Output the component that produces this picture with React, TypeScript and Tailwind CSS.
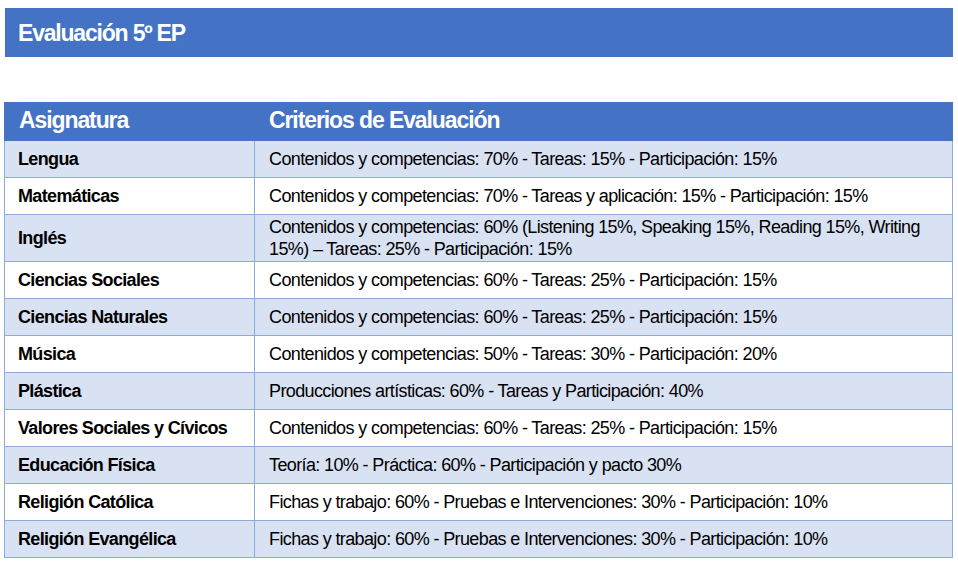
const rows: [string, string][] = [
  ["Lengua", "Contenidos y competencias: 70% - Tareas: 15% - Participación: 15%"],
  ["Matemáticas", "Contenidos y competencias: 70% - Tareas y aplicación: 15% - Participación: 15%"],
  [
    "Inglés",
    "Contenidos y competencias: 60% (Listening 15%, Speaking 15%, Reading 15%, Writing 15%) – Tareas: 25% - Participación: 15%",
  ],
  ["Ciencias Sociales", "Contenidos y competencias: 60% - Tareas: 25% - Participación: 15%"],
  ["Ciencias Naturales", "Contenidos y competencias: 60% - Tareas: 25% - Participación: 15%"],
  ["Música", "Contenidos y competencias: 50% - Tareas: 30% - Participación: 20%"],
  ["Plástica", "Producciones artísticas: 60% - Tareas y Participación: 40%"],
  ["Valores Sociales y Cívicos", "Contenidos y competencias: 60% - Tareas: 25% - Participación: 15%"],
  ["Educación Física", "Teoría: 10% - Práctica: 60% - Participación y pacto 30%"],
  ["Religión Católica", "Fichas y trabajo: 60% - Pruebas e Intervenciones: 30% - Participación: 10%"],
  ["Religión Evangélica", "Fichas y trabajo: 60% - Pruebas e Intervenciones: 30% - Participación: 10%"],
];

export default function App() {
  return (
    <div
      className="w-[958px] h-[561px] bg-white px-[4px] pt-[8px] overflow-hidden"
      style={{ fontFamily: '"Liberation Sans Narrow", "Arial Narrow", "Liberation Sans", sans-serif' }}
    >
      {/* Title bar */}
      <div className="ml-px w-[948px] h-[49px] bg-[#4472c4] flex items-center pl-[13px]">
        <h1 className="text-white font-bold text-[23px] tracking-[-1.2px] leading-none translate-y-px">
          Evaluación 5º EP
        </h1>
      </div>

      <table className="mt-[45px] w-[949px] border-collapse table-fixed">
        <colgroup>
          <col className="w-[250px]" />
          <col />
        </colgroup>
        <thead>
          <tr className="bg-[#4472c4] h-[38px]">
            <th className="text-left text-white font-bold text-[23px] leading-none tracking-[-1.1px] pl-[14px] pb-[3px] border border-[#4472c4]">
              Asignatura
            </th>
            <th className="text-left text-white font-bold text-[23px] leading-none tracking-[-1.1px] pl-[14px] pb-[3px] border border-[#4472c4]">
              Criterios de Evaluación
            </th>
          </tr>
        </thead>
        <tbody>
          {rows.map(([subject, criteria], i) => (
            <tr key={subject} className={i % 2 === 0 ? "bg-[#d9e2f3]" : "bg-white"}>
              <td
                className={`border border-[#8eaadb] pl-[13px] font-bold text-[18px] tracking-[-0.65px] text-black ${
                  subject === "Inglés" ? "h-[47px]" : "h-[37px]"
                }`}
              >
                {subject}
              </td>
              <td className="border border-[#8eaadb] pl-[14px] pr-[30px] text-[18px] tracking-[-0.62px] text-black leading-[22px]">
                {criteria}
              </td>
            </tr>
          ))}
        </tbody>
      </table>
    </div>
  );
}
